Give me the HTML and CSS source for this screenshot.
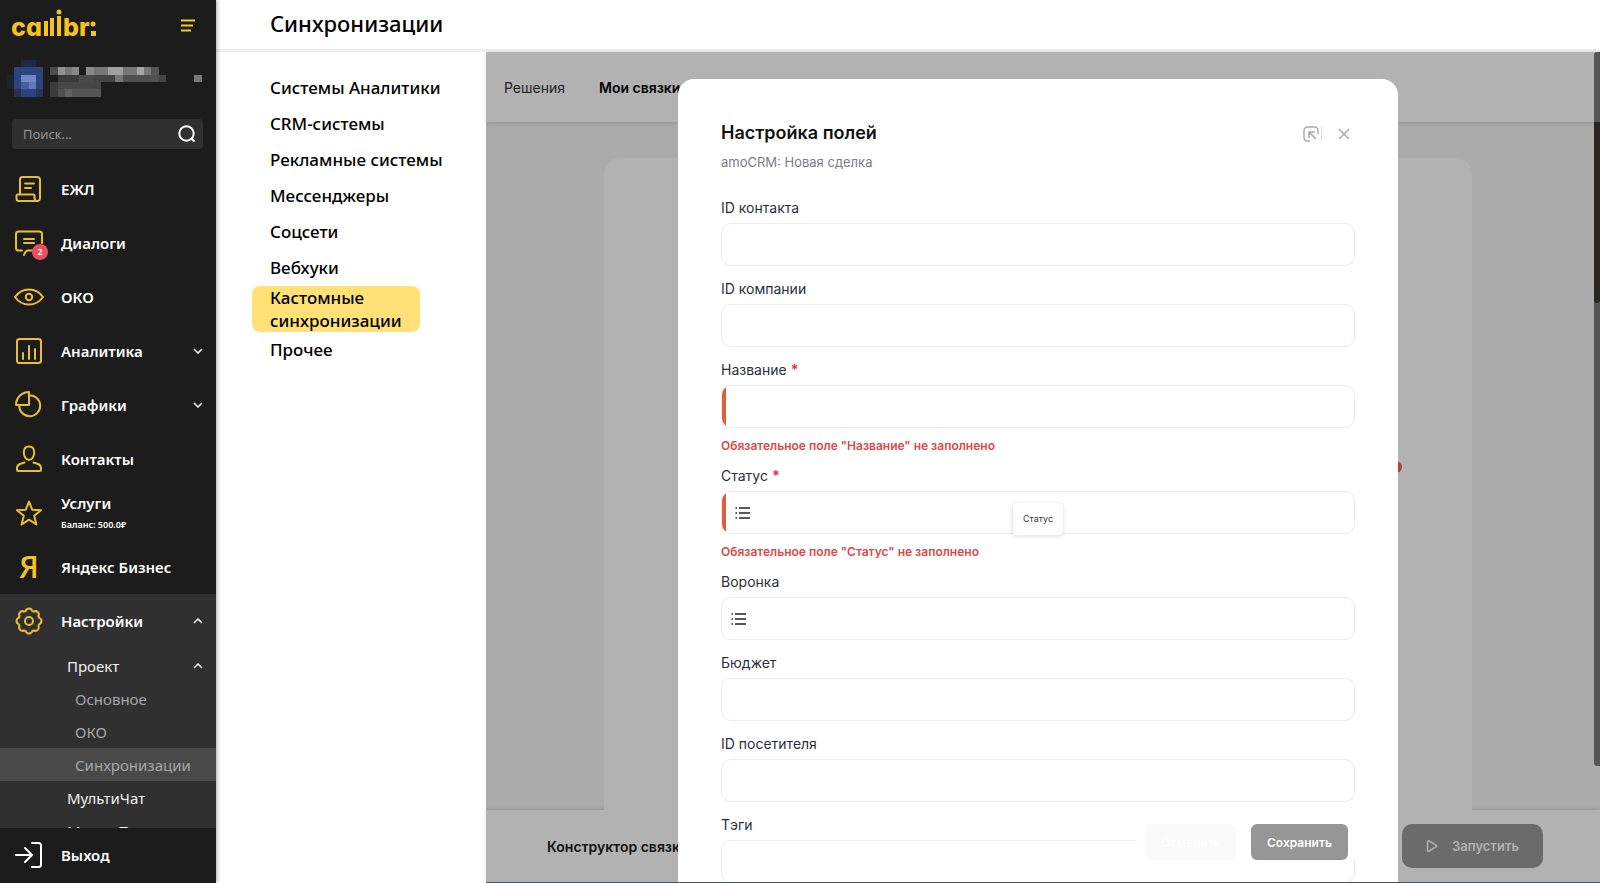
FILE: index.html
```html
<!DOCTYPE html>
<html lang="ru">
<head>
<meta charset="utf-8">
<title>Синхронизации</title>
<link rel="stylesheet" href="styles.css">
</head>
<body>
<div class="app">
  <aside class="sidebar">
    <div class="brand">
      <a href="#" class="logo" aria-label="callibri">
        <svg width="86" height="40" viewBox="0 0 86 40">
          <text x="-1" y="28" class="logo-text">ca</text>
          <rect x="32" y="13" width="4" height="15"/>
          <rect x="38" y="10" width="4" height="18"/>
          <rect x="45" y="8" width="4" height="20"/>
          <circle cx="47" cy="4" r="2.500"/>
          <text x="51" y="28" class="logo-text">br</text>
          <circle cx="81" cy="16" r="2.500"/>
          <rect x="79" y="23" width="5" height="5"/>
        </svg>
      </a>
      <button class="burger" aria-label="Меню">
        <svg width="16" height="13" viewBox="0 0 16 13"><path d="M1 1.500h14M1 6.500h12M1 11.500h10"/></svg>
      </button>
    </div>
    <div class="account">
      <svg width="216" height="40" viewBox="0 0 648 120" shape-rendering="crispEdges">
        <rect x="64" y="0" width="44" height="22" fill="#1f2940"/>
        <rect x="42" y="22" width="88" height="88" fill="#2b4480"/>
        <rect x="20" y="44" width="22" height="44" fill="#1d222f"/>
        <rect x="42" y="88" width="22" height="22" fill="#273350"/>
        <rect x="108" y="88" width="22" height="22" fill="#26345a"/>
        <rect x="64" y="44" width="44" height="22" fill="#6f87c4"/>
        <rect x="86" y="66" width="22" height="22" fill="#6079b8"/>
        <rect x="64" y="66" width="22" height="22" fill="#455f9f"/>
        <rect x="151" y="22" width="22" height="22" fill="#4b4b4b"/>
        <rect x="173" y="22" width="22" height="22" fill="#929292"/>
        <rect x="195" y="22" width="20" height="22" fill="#777"/>
        <rect x="215" y="22" width="23" height="22" fill="#888"/>
        <rect x="259" y="22" width="22" height="22" fill="#888"/>
        <rect x="281" y="22" width="43" height="22" fill="#777"/>
        <rect x="324" y="22" width="44" height="22" fill="#a0a0a0"/>
        <rect x="368" y="22" width="42" height="22" fill="#777"/>
        <rect x="410" y="22" width="22" height="22" fill="#a5a5a5"/>
        <rect x="432" y="22" width="22" height="22" fill="#777"/>
        <rect x="454" y="22" width="22" height="22" fill="#555"/>
        <rect x="173" y="44" width="65" height="22" fill="#3a3a3a"/>
        <rect x="238" y="44" width="43" height="22" fill="#4a4a4a"/>
        <rect x="281" y="44" width="65" height="22" fill="#444"/>
        <rect x="346" y="44" width="22" height="22" fill="#777"/>
        <rect x="368" y="44" width="108" height="22" fill="#505050"/>
        <rect x="476" y="44" width="21" height="22" fill="#444"/>
        <rect x="151" y="66" width="22" height="44" fill="#3a3a3a"/>
        <rect x="173" y="66" width="130" height="22" fill="#464646"/>
        <rect x="173" y="88" width="22" height="22" fill="#505050"/>
        <rect x="195" y="88" width="22" height="22" fill="#626262"/>
        <rect x="217" y="88" width="86" height="22" fill="#545454"/>
        <rect x="583" y="44" width="22" height="22" fill="#777"/>
      </svg>
    </div>
    <form class="search">
      <input type="search" placeholder="Поиск..." aria-label="Поиск">
      <button type="button" aria-label="Найти">
        <svg width="18" height="18" viewBox="0 0 18 18"><circle cx="8.500" cy="8.500" r="7.200"/><path d="M13.200 13.200l3.300 3.300"/></svg>
      </button>
    </form>
    <nav class="nav">
      <a href="#" class="item">
        <span class="icon"><svg width="30" height="30" viewBox="0 0 30 30"><path d="M6 20.500V5.500a2.500 2.500 0 0 1 2.500-2.500h15a2.500 2.500 0 0 1 2.500 2.500v19a2.500 2.500 0 0 1-2.500 2.500H5a2.500 2.500 0 0 1-2.500-2.500v-3a1 1 0 0 1 1-1h16a1 1 0 0 1 1 1v2.500a3 3 0 0 0 3 3M11 9.500h9M11 14h6"/></svg></span>
        <span>ЕЖЛ</span>
      </a>
      <a href="#" class="item">
        <span class="icon"><svg width="30" height="30" viewBox="0 0 30 30"><path d="M8 22.500H4.500A2.500 2.500 0 0 1 2 20V6a2.500 2.500 0 0 1 2.500-2.500h21A2.500 2.500 0 0 1 28 6v9M10 27c1-3 2-4.500 4-4.500h5M10 11h10M10 15h10"/></svg><span class="badge">2</span></span>
        <span>Диалоги</span>
      </a>
      <a href="#" class="item">
        <span class="icon"><svg width="30" height="30" viewBox="0 0 30 30"><path d="M1 15C4.500 10 9.500 7.500 15 7.500S25.500 10 29 15c-3.500 5-8.500 7.500-14 7.500S4.500 20 1 15z"/><circle cx="15" cy="15" r="3.200"/></svg></span>
        <span>ОКО</span>
      </a>
      <a href="#" class="item">
        <span class="icon"><svg width="30" height="30" viewBox="0 0 30 30"><rect x="3" y="3" width="24" height="24" rx="2.500"/><path d="M9 17v6M15 10v13M21 13v10"/></svg></span>
        <span>Аналитика</span>
        <svg class="chevron" width="10" height="6" viewBox="0 0 10 6"><path d="M1 1l4 4 4-4"/></svg>
      </a>
      <a href="#" class="item">
        <span class="icon"><svg width="30" height="30" viewBox="0 0 30 30"><path d="M15 2v13H2A13 13 0 0 1 15 2zM15 5.200A10.500 10.500 0 1 1 5.200 15"/></svg></span>
        <span>Графики</span>
        <svg class="chevron" width="10" height="6" viewBox="0 0 10 6"><path d="M1 1l4 4 4-4"/></svg>
      </a>
      <a href="#" class="item">
        <span class="icon"><svg width="30" height="30" viewBox="0 0 30 30"><path d="M15 2.500c3.300 0 5.200 2.400 5.200 6S18 16 15 16s-5.200-3.900-5.200-7.500 1.900-6 5.200-6zM10.500 18.500L6 20c-2 .7-3 2-3 4v1.500A1.500 1.500 0 0 0 4.500 27h21a1.500 1.500 0 0 0 1.500-1.500V24c0-2-1-3.300-3-4l-4.500-1.500"/></svg></span>
        <span>Контакты</span>
      </a>
      <a href="#" class="item">
        <span class="icon"><svg width="30" height="30" viewBox="0 0 30 30"><path d="M15 3.500l3.200 8.200 8.800.5-6.800 5.600 2.200 8.700L15 21.700l-7.400 4.800 2.200-8.700L3 12.200l8.800-.5z"/></svg></span>
        <span class="stack"><span>Услуги</span><small>Баланс: 500.0₽</small></span>
      </a>
      <a href="#" class="item">
        <span class="icon ya" aria-hidden="true">Я</span>
        <span>Яндекс Бизнес</span>
      </a>
      <div class="group">
        <a href="#" class="item">
          <span class="icon"><svg width="30" height="30" viewBox="0 0 30 30"><path d="M11.900 4.700a3.300 3.300 0 0 1 6.200 0a3.300 3.300 0 0 0 2 .8a3.300 3.300 0 0 1 4.400 4.400a3.300 3.300 0 0 0 .8 2a3.300 3.300 0 0 1 0 6.200a3.300 3.300 0 0 0-.8 2a3.300 3.300 0 0 1-4.400 4.400a3.300 3.300 0 0 0-2 .8a3.300 3.300 0 0 1-6.200 0a3.300 3.300 0 0 0-2-.8a3.300 3.300 0 0 1-4.400-4.400a3.300 3.300 0 0 0-.8-2a3.300 3.300 0 0 1 0-6.200a3.300 3.300 0 0 0 .8-2a3.300 3.300 0 0 1 4.400-4.400a3.300 3.300 0 0 0 2-.8z"/><circle cx="15" cy="15" r="4"/></svg></span>
          <span>Настройки</span>
          <svg class="chevron" width="10" height="6" viewBox="0 0 10 6"><path d="M1 5l4-4 4 4"/></svg>
        </a>
        <a href="#" class="sub">Проект<svg class="chevron" width="10" height="6" viewBox="0 0 10 6"><path d="M1 5l4-4 4 4"/></svg></a>
        <a href="#" class="sub deep">Основное</a>
        <a href="#" class="sub deep">ОКО</a>
        <a href="#" class="sub deep current">Синхронизации</a>
        <a href="#" class="sub">МультиЧат</a>
        <a href="#" class="sub">МультиТрекинг</a>
      </div>
    </nav>
    <a href="#" class="item logout">
      <span class="icon"><svg width="30" height="30" viewBox="0 0 30 30"><path d="M2 15h16M11 8l7 7-7 7M18 3h6.500A2.500 2.500 0 0 1 27 5.500v19a2.500 2.500 0 0 1-2.500 2.500H18"/></svg></span>
      <span>Выход</span>
    </a>
  </aside>

  <div class="page">
    <header class="page-head"><h1>Синхронизации</h1></header>
    <div class="content">
      <ul class="menu">
        <li><a href="#">Системы Аналитики</a></li>
        <li><a href="#">CRM-системы</a></li>
        <li><a href="#">Рекламные системы</a></li>
        <li><a href="#">Мессенджеры</a></li>
        <li><a href="#">Соцсети</a></li>
        <li><a href="#">Вебхуки</a></li>
        <li><a href="#" class="active">Кастомные<br>синхронизации</a></li>
        <li><a href="#">Прочее</a></li>
      </ul>
      <main class="workspace">
        <div class="tabs"><a href="#">Решения</a><a href="#" class="on">Мои связки</a></div>
        <div class="canvas"><div class="card"><span class="dot"></span></div></div>
        <div class="bottom">
          <span class="bottom-title">Конструктор связки</span>
          <button class="launch"><svg width="12" height="14" viewBox="0 0 12 14"><path d="M1.500 3v8c0 1 .8 1.400 1.600 1l6.900-4.200c.7-.4.700-1.200 0-1.600L3.100 2c-.8-.4-1.600 0-1.600 1z"/></svg>Запустить</button>
        </div>
        <div class="scroll"><div class="thumb"></div></div>
        <div class="overlay">
          <section class="modal" role="dialog" aria-labelledby="dlg">
            <div class="modal-head">
              <div>
                <h2 id="dlg">Настройка полей</h2>
                <p>amoCRM: Новая сделка</p>
              </div>
              <div class="tools">
                <button aria-label="Свернуть"><svg width="18" height="18" viewBox="0 0 18 18"><path d="M8 16H5.500A3.500 3.500 0 0 1 2 12.500v-7A3.500 3.500 0 0 1 5.500 2h7A3.500 3.500 0 0 1 16 5.500V9M7 13V7h6M7.500 7.500L14 14"/></svg></button>
                <span class="split"></span>
                <button aria-label="Закрыть"><svg width="12" height="12" viewBox="0 0 12 12"><path d="M1 1l10 10M11 1L1 11"/></svg></button>
              </div>
            </div>
            <form class="fields">
              <div class="field"><label for="f1">ID контакта</label><div class="box"><input id="f1" type="text"></div></div>
              <div class="field"><label for="f2">ID компании</label><div class="box"><input id="f2" type="text"></div></div>
              <div class="field"><label for="f3">Название <b>*</b></label><div class="box invalid"><input id="f3" type="text"></div><p class="error">Обязательное поле "Название" не заполнено</p></div>
              <div class="field"><label for="f4">Статус <b>*</b></label><div class="box invalid"><svg class="list" width="16" height="14" viewBox="0 0 16 14"><path d="M4 2h11M4 7h11M4 12h11M0.500 2h1.500M0.500 7h1.500M0.500 12h1.500"/></svg><input id="f4" type="text"><span class="tip">Статус</span></div><p class="error">Обязательное поле "Статус" не заполнено</p></div>
              <div class="field"><label for="f5">Воронка</label><div class="box"><svg class="list" width="16" height="14" viewBox="0 0 16 14"><path d="M4 2h11M4 7h11M4 12h11M0.500 2h1.500M0.500 7h1.500M0.500 12h1.500"/></svg><input id="f5" type="text"></div></div>
              <div class="field"><label for="f6">Бюджет</label><div class="box"><input id="f6" type="text"></div></div>
              <div class="field"><label for="f7">ID посетителя</label><div class="box"><input id="f7" type="text"></div></div>
              <div class="field"><label for="f8">Тэги</label><div class="box"><input id="f8" type="text"></div></div>
            </form>
            <div class="actions"><button class="cancel">Отменить</button><button class="save">Сохранить</button></div>
          </section>
        </div>
      </main>
    </div>
  </div>
</div>
</body>
</html>
```
FILE: styles.css
```css
* { box-sizing: border-box; }
body { margin: 0; font-family: "Noto Sans", "Open Sans", sans-serif; background: #fff; color: #111; }
a { color: inherit; text-decoration: none; }
button { font: inherit; border: 0; padding: 0; background: none; cursor: pointer; }
h1, h2, p, ul { margin: 0; padding: 0; }
svg { display: block; fill: none; flex: none; }

.app { display: flex; height: 100vh; overflow: hidden; }

/* sidebar */
.sidebar { flex: 0 0 216px; min-width: 0; display: flex; flex-direction: column; background: #1c1c1c; color: #fff; box-shadow: 1px 0 4px rgba(0, 0, 0, .35); z-index: 1; }
.brand { display: flex; justify-content: space-between; align-items: flex-start; height: 60px; padding: 8px 20px 0 12px; }
.logo svg { fill: #f5c320; }
.logo-text { font: 800 25px Inter, sans-serif; font-feature-settings: "cv11"; }
.burger { margin-top: 11px; }
.burger svg { stroke: #f5c936; stroke-width: 2; }
.account { height: 59px; }
.search { display: flex; align-items: center; height: 30px; margin: 0 13px 13px 12px; padding: 0 7px 0 11px; border-radius: 4px; background: #303030; }
.search input { flex: 1; width: 100%; min-width: 0; border: 0; outline: 0; padding: 0; background: none; font: 13px "Open Sans", sans-serif; color: #ddd; }
.search input::placeholder { color: #9a9a9a; opacity: 1; }
.search svg { stroke: #fff; stroke-width: 2; }
.nav { flex: 1; min-height: 0; overflow: hidden; }
.item { display: flex; align-items: center; height: 54px; padding: 0 13px 0 14px; font-size: 15px; font-weight: 600; line-height: 20px; white-space: nowrap; }
.icon { position: relative; flex: none; width: 30px; margin-right: 17px; }
.icon svg { stroke: #e9be34; stroke-width: 2; stroke-linecap: round; stroke-linejoin: round; }
.badge { position: absolute; right: -4px; bottom: -2px; width: 16px; height: 16px; border-radius: 50%; background: #e8515c; font-size: 9px; line-height: 16px; text-align: center; }
.ya { text-align: center; color: #f5c320; font: 600 30px/42px "Open Sans", sans-serif; }
.stack { display: flex; flex-direction: column; gap: 4px; }
.stack small { font-size: 9px; line-height: 16px; }
.chevron { margin-left: auto; stroke: #fff; stroke-width: 1.5; }
.group { background: #303030; }
.group .item { margin-bottom: 1px; }
.sub { display: flex; align-items: center; height: 33px; padding: 0 13px 0 67px; font-size: 15px; line-height: 20px; color: #f0f0f0; }
.deep { padding-left: 75px; color: #a6a6a6; }
.current { background: #494949; }
.logout { height: 55px; padding-bottom: 2px; }
.logout .icon svg { stroke: #fff; }

/* page */
.page { flex: 1; min-width: 0; display: flex; flex-direction: column; }
.page-head { padding: 7px 54px 10px; border-bottom: 3px solid #ececec; }
.page-head h1 { font-size: 22px; font-weight: 500; line-height: 32px; color: #000; }
.content { flex: 1; min-height: 0; display: flex; }
.menu { flex: 0 0 270px; padding: 18px 0 0 36px; list-style: none; font-size: 17px; font-weight: 500; color: #000; }
.menu a { display: block; width: fit-content; padding: 0 18px; line-height: 36px; white-space: nowrap; }
.menu .active { line-height: 23px; border-radius: 8px; background: #ffe177; }

/* workspace behind the dialog */
.workspace { position: relative; flex: 1; min-width: 0; display: flex; flex-direction: column; background: #ababab; font-family: Inter, sans-serif; border-bottom: 1px solid #4b5560; }
.tabs { display: flex; gap: 34px; height: 70px; padding: 0 18px; align-items: center; background: #b2b2b2; box-shadow: 0 1px 4px rgba(0, 0, 0, .14); font-size: 14px; z-index: 1; color: #1e1e1e; }
.tabs .on { font-weight: 600; color: #000; }
.canvas { flex: 1; min-height: 0; display: flex; padding: 36px 128px 0 118px; }
.card { position: relative; flex: 1; border-radius: 16px 16px 0 0; background: #b2b2b2; }
.dot { position: absolute; right: 70px; top: 303px; width: 12px; height: 12px; border-radius: 50%; background: #b0452f; }
.bottom { display: flex; align-items: center; justify-content: space-between; height: 72px; padding: 0 57px 0 61px; background: #b2b2b2; box-shadow: 0 -1px 4px rgba(0, 0, 0, .14); font-size: 14px; font-weight: 600; color: #111; }
.launch { display: flex; align-items: center; justify-content: center; gap: 14px; width: 141px; height: 44px; border-radius: 10px; background: #6b6b6b; color: #b2b2b2; font-size: 13px; }
.launch svg { stroke: #b2b2b2; stroke-width: 1.5; }
.scroll { position: absolute; right: 0; top: 0; width: 6px; height: 86%; padding-top: 70px; border-radius: 3px 0 0 3px; background: #555; z-index: 2; }
.thumb { height: 181px; border-radius: 0 0 3px 3px; background: #272624; }

/* dialog */
.overlay { position: absolute; inset: 0 10px 0 0; display: flex; justify-content: center; padding-top: 27px; z-index: 1; }
.modal { position: relative; width: 720px; padding: 42px 43px 0; overflow: hidden; border-radius: 16px 16px 0 0; background: #fff; }
.modal-head { display: flex; justify-content: space-between; margin-bottom: 26px; }
.modal-head h2 { font-size: 18px; font-weight: 600; line-height: 24px; margin-bottom: 7px; }
.modal-head p { font-size: 13px; line-height: 20px; color: #7b7d85; }
.tools { display: flex; align-items: center; height: 26px; padding-right: 5px; }
.tools svg { stroke: #a9abb0; stroke-width: 1.5; }
.split { width: 1px; height: 14px; margin: 0 16px 0 1px; background: #dcdce0; }
.field { margin-bottom: 13px; }
.field label { display: block; margin-bottom: 5px; font-size: 14px; line-height: 20px; color: #2c2f3a; }
.field label b { color: #e03a3a; }
.box { position: relative; display: flex; align-items: center; height: 43px; padding: 0 9px; border: 1px solid #ebebed; border-radius: 10px; background: #fff; }
.box input { flex: 1; min-width: 0; height: 100%; border: 0; outline: 0; background: none; font: 14px Inter, sans-serif; }
.invalid { padding-left: 13px; background: linear-gradient(to right, #dd5f3c 4px, #fff 4px); }
.list { stroke: #222; stroke-width: 1.5; }
.tip { position: absolute; left: 50%; top: 11px; transform: translateX(-50%); padding: 8px 10px; border-radius: 4px; background: #fff; box-shadow: 0 1px 4px rgba(0, 0, 0, .14); font-size: 9px; line-height: 16px; color: #333; }
.error { margin-top: 11px; font-size: 12px; font-weight: 600; line-height: 14px; color: #d94a4a; }
.actions { position: absolute; right: 43px; bottom: 22px; display: flex; gap: 15px; padding: 0 7px 0 9px; background: #fff; }
.actions button { width: 97px; height: 36px; border-radius: 6px; font-size: 12px; font-weight: 600; color: #fff; }
.actions .cancel { width: 90px; background: #fafafa; }
.actions .save { background: #969696; }
```
